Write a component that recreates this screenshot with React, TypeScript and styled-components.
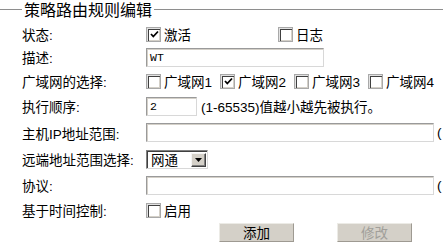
import React from 'react';
import styled, { createGlobalStyle } from 'styled-components';

const GlobalStyle = createGlobalStyle`
  html, body {
    margin: 0;
    padding: 0;
    background: #fff;
    overflow: hidden;
  }
  body {
    font-family: "Liberation Sans", "Noto Sans CJK SC", sans-serif;
    font-size: 13.5px;
    color: #000;
  }
`;

const Fieldset = styled.fieldset`
  margin: 0;
  padding: 5px 0 0 22px;
  border: none;
  border-top: 1px solid #8e8e8e;
  min-width: 0;
  width: 443px;
  box-sizing: border-box;
`;

const Legend = styled.legend`
  padding: 0 2px;
  font-family: "Noto Sans CJK SC", sans-serif;
  font-size: 16px;
  line-height: 18px;
`;

const Row = styled.div<{ $h: number }>`
  display: flex;
  align-items: center;
  height: ${({ $h }) => $h}px;
  white-space: nowrap;
`;

const Label = styled.div`
  width: 124px;
  flex: none;
`;

const Field = styled.div<{ $gap?: number; $indent?: number }>`
  display: flex;
  align-items: center;
  gap: ${({ $gap }) => $gap ?? 0}px;
  padding-left: ${({ $indent }) => $indent ?? 0}px;
`;

const CheckWrap = styled.label<{ $w?: number }>`
  display: inline-flex;
  align-items: center;
  gap: 3px;
  width: ${({ $w }) => ($w ? `${$w}px` : 'auto')};
  flex: none;
`;

const Box = styled.span`
  width: 15px;
  height: 15px;
  box-sizing: border-box;
  border: 1px solid #a9a9a9;
  background: #fff;
  box-shadow: inset 1px 1px 0 #e2e2e2, inset 2px 2px 0 #404040, inset -1px -1px 0 #d4d0c8;
  display: inline-flex;
  align-items: center;
  justify-content: center;
  padding: 1px 0 0 1px;
`;

const TextInput = styled.div<{ $w: number }>`
  width: ${({ $w }) => $w}px;
  height: 19px;
  box-sizing: border-box;
  border: 1px solid;
  border-color: #9a9a9a #d8d8d8 #d8d8d8 #9a9a9a;
  box-shadow: inset 1px 1px 0 #d4d0c8;
  background: #fff;
  padding: 2px 3px;
  font-family: "Liberation Mono", monospace;
  font-size: 11.5px;
  line-height: 14px;
  flex: none;
`;

const Hint = styled.span<{ $ml: number }>`
  margin-left: ${({ $ml }) => $ml}px;
`;

const Select = styled.div`
  width: 62px;
  height: 19px;
  box-sizing: border-box;
  border: 1px solid;
  border-color: #808080 #d8d8d8 #d8d8d8 #808080;
  box-shadow: inset 1px 1px 0 #404040;
  background: #fff;
  display: flex;
  align-items: center;
  justify-content: space-between;
  padding: 2px 1px 1px 4px;
`;

const SelectText = styled.span`
  font-family: "Noto Sans CJK SC", sans-serif;
  font-size: 13.5px;
  line-height: 15px;
`;

const ArrowBtn = styled.span`
  width: 15px;
  height: 14px;
  box-sizing: border-box;
  background: #d4d0c8;
  border: 1px solid;
  border-color: #f4f4f4 #404040 #404040 #f4f4f4;
  box-shadow: inset -1px -1px 0 #808080;
  display: inline-flex;
  align-items: center;
  justify-content: center;
`;

const Button = styled.button<{ $disabled?: boolean }>`
  width: 75px;
  height: 19px;
  box-sizing: border-box;
  background: #d4d0c8;
  border: 1px solid;
  border-color: #ecebe6 #9e9a92 #9e9a92 #ecebe6;
  font-family: "Noto Sans CJK SC", sans-serif;
  font-size: 13.5px;
  line-height: 15px;
  padding: 0;
  color: ${({ $disabled }) => ($disabled ? '#a19f9a' : '#000')};
`;

const Check: React.FC<{ checked?: boolean; label: string; w?: number }> = ({ checked, label, w }) => (
  <CheckWrap $w={w}>
    <Box>
      {checked && (
        <svg width="9" height="9" viewBox="0 0 9 9">
          <path d="M1 4 L3.3 6.5 L8 1.5" stroke="#000" strokeWidth="1.8" fill="none" />
        </svg>
      )}
    </Box>
    <span>{label}</span>
  </CheckWrap>
);

export default function App() {
  return (
    <>
      <GlobalStyle />
      <Fieldset>
        <Legend>策略路由规则编辑</Legend>

        <Row $h={22}>
          <Label>状态:</Label>
          <Field>
            <Check checked label="激活" w={132} />
            <Check label="日志" />
          </Field>
        </Row>

        <Row $h={24}>
          <Label>描述:</Label>
          <Field>
            <TextInput $w={178}>WT</TextInput>
          </Field>
        </Row>

        <Row $h={24}>
          <Label>广域网的选择:</Label>
          <Field>
            <Check label="广域网1" w={74} />
            <Check checked label="广域网2" w={74} />
            <Check label="广域网3" w={74} />
            <Check label="广域网4" w={74} />
          </Field>
        </Row>

        <Row $h={26}>
          <Label>执行顺序:</Label>
          <Field>
            <TextInput $w={51}>2</TextInput>
            <Hint $ml={4}>(1-65535)值越小越先被执行。</Hint>
          </Field>
        </Row>

        <Row $h={27}>
          <Label>主机IP地址范围:</Label>
          <Field>
            <TextInput $w={288} />
            <Hint $ml={3}>(</Hint>
          </Field>
        </Row>

        <Row $h={26}>
          <Label>远端地址范围选择:</Label>
          <Field>
            <Select>
              <SelectText>网通</SelectText>
              <ArrowBtn>
                <svg width="7" height="4" viewBox="0 0 7 4">
                  <path d="M0 0 H7 L3.5 4 Z" fill="#000" />
                </svg>
              </ArrowBtn>
            </Select>
          </Field>
        </Row>

        <Row $h={26}>
          <Label>协议:</Label>
          <Field>
            <TextInput $w={288} />
            <Hint $ml={3}>(</Hint>
          </Field>
        </Row>

        <Row $h={24}>
          <Label>基于时间控制:</Label>
          <Field>
            <Check label="启用" />
          </Field>
        </Row>

        <Row $h={21}>
          <Label />
          <Field $indent={73} $gap={43}>
            <Button>添加</Button>
            <Button $disabled>修改</Button>
          </Field>
        </Row>
      </Fieldset>
    </>
  );
}
